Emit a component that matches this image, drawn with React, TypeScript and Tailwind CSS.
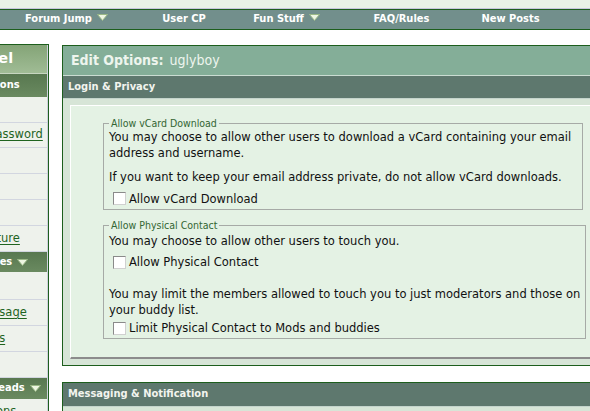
import React from "react";

const T = "font-['DejaVu_Sans_Condensed','Liberation_Sans',sans-serif]";

function Arrow() {
  return (
    <svg width="11" height="7" viewBox="0 0 11 7" className="inline-block ml-[5px] align-[1px]">
      <polygon points="0.5,0.5 10.5,0.5 5.5,6.5" fill="#eef6e2" stroke="#9ab886" strokeWidth="1" />
    </svg>
  );
}

function Check({ label }: { label: string }) {
  return (
    <div className="flex items-center h-full">
      <span className="ml-[4px] inline-block w-[13px] h-[13px] bg-white border border-t-[#8a8a8a] border-l-[#8a8a8a] border-b-[#d0d0d0] border-r-[#d0d0d0]" />
      <span className="ml-[3px]">{label}</span>
    </div>
  );
}

function SideHead({ children, h, arrow }: { children: React.ReactNode; h: string; arrow?: boolean }) {
  return (
    <div className={`${h} flex items-center pl-[14px] bg-linear-to-b from-[#587850] to-[#6a8a60] text-white font-bold text-[11px] whitespace-nowrap ${T}`}>
      {children}
      {arrow && <Arrow />}
    </div>
  );
}

function SideRow({ children, h }: { children?: React.ReactNode; h: string }) {
  return (
    <div className={`${h} flex items-center pl-[15px] border-b border-[#d2d6e0] text-[11.5px] whitespace-nowrap`}>
      {children && <a className="text-[#1f641f] underline underline-offset-[2px]">{children}</a>}
    </div>
  );
}

export default function App() {
  return (
    <div className="w-[590px] h-[411px] overflow-hidden bg-white font-['DejaVu_Sans',sans-serif] text-[#111]">
      <div className="h-[9px] bg-[#e8f2e6] border-b border-[#c6c6de]" />
      <nav className={`h-[21px] bg-[#728f8c] border-y border-[#1d5e1d] flex items-center text-white font-bold text-[11px] ${T}`}>
        <div className="w-[133px] text-center">Forum Jump<Arrow /></div>
        <div className="w-[102px] text-center">User CP</div>
        <div className="w-[103px] text-center">Fun Stuff<Arrow /></div>
        <div className="w-[127px] text-center">FAQ/Rules</div>
        <div className="w-[91px] text-center">New Posts</div>
      </nav>
      <div className="flex items-start pt-[14px]">
        <aside className="w-[49px] h-[400px] shrink-0 overflow-hidden border-t border-r border-[#1d5e1d]">
          <div className="w-[148px] ml-[-100px] h-full bg-[#eef2ec] border-r border-[#cdd1dc]">
            <div className="h-[29px] flex items-center pl-[3px] bg-linear-to-b from-[#84a477] to-[#a0bc95] border-b border-[#c6d6c0] text-white font-bold text-[14.5px] whitespace-nowrap">
              Control Panel
            </div>
            <SideHead h="h-[23px]">Settings &amp; Options</SideHead>
            <SideRow h="h-[26px]">Edit Profile</SideRow>
            <SideRow h="h-[25px]">Edit Email &amp; Password</SideRow>
            <SideRow h="h-[26px]">Edit Options</SideRow>
            <SideRow h="h-[26px]">Edit Signature</SideRow>
            <SideRow h="h-[26px]">Edit Avatar</SideRow>
            <SideRow h="h-[26px]">Edit Profile Picture</SideRow>
            <SideHead h="h-[20px]" arrow>Private Messages</SideHead>
            <SideRow h="h-[28px]">List Messages</SideRow>
            <SideRow h="h-[26px]">Send New Message</SideRow>
            <SideRow h="h-[26px]">Track Messages</SideRow>
            <SideRow h="h-[26px]">Edit Folders</SideRow>
            <SideHead h="h-[21px]" arrow>Subscribed Threads</SideHead>
            <SideRow h="h-[26px]">List Subscriptions</SideRow>
          </div>
        </aside>
        <main className="ml-[13px] mt-[1px] shrink-0 w-[562px]">
          <section className="border border-[#1d5e1d] bg-[#d7e5d7]">
            <div className={`h-[30px] bg-[#84ae98] border-b border-[#cadcd2] flex items-center pl-[8px] text-[14px] text-[#eef5ee] ${T}`}>
              <b>Edit Options:</b>
              <span className="ml-[6px]">uglyboy</span>
            </div>
            <div className={`h-[23px] bg-[#5e786e] border-b border-[#c4d4cc] flex items-center pl-[5px] text-[11px] font-bold text-[#f2f4ee] ${T}`}>
              Login &amp; Privacy
            </div>
            <div className="pt-[6px] px-[7px] pb-[6px]">
              <div className="bg-[#e4f2e4] border-t border-l border-white border-b-2 border-r-2 border-b-[#8c8c8c] border-r-[#8c8c8c] pt-[11px] pl-[32px] pr-[31px] pb-[18px] text-[11.5px] leading-[16px]">
                <fieldset className="border border-[#a6aaa6] px-[5px]">
                  <legend className={`px-[2px] text-[10.5px] leading-[12px] text-[#336633] ${T}`}>Allow vCard Download</legend>
                  <div className="whitespace-nowrap">You may choose to allow other users to download a vCard containing your email</div>
                  <div className="whitespace-nowrap">address and username.</div>
                  <div className="whitespace-nowrap mt-[8px]">If you want to keep your email address private, do not allow vCard downloads.</div>
                  <div className="mt-[3px] h-[21px]"><Check label="Allow vCard Download" /></div>
                </fieldset>
                <fieldset className="mt-[9px] border border-[#a6aaa6] px-[5px]">
                  <legend className={`px-[2px] text-[10.5px] leading-[12px] text-[#336633] ${T}`}>Allow Physical Contact</legend>
                  <div className="whitespace-nowrap mt-[2px]">You may choose to allow other users to touch you.</div>
                  <div className="mt-[3px] h-[20px]"><Check label="Allow Physical Contact" /></div>
                  <div className="whitespace-nowrap mt-[14px]">You may limit the members allowed to touch you to just moderators and those on</div>
                  <div className="whitespace-nowrap">your buddy list.</div>
                  <div className="h-[20px]"><Check label="Limit Physical Contact to Mods and buddies" /></div>
                </fieldset>
              </div>
            </div>
          </section>
          <section className="mt-[16px] border border-[#1d5e1d] bg-[#d7e5d7]">
            <div className={`h-[24px] bg-[#5e786e] border-b border-[#c4d4cc] flex items-center pl-[5px] text-[11px] font-bold text-[#f2f4ee] ${T}`}>
              Messaging &amp; Notification
            </div>
            <div className="h-[30px]" />
          </section>
        </main>
      </div>
    </div>
  );
}
